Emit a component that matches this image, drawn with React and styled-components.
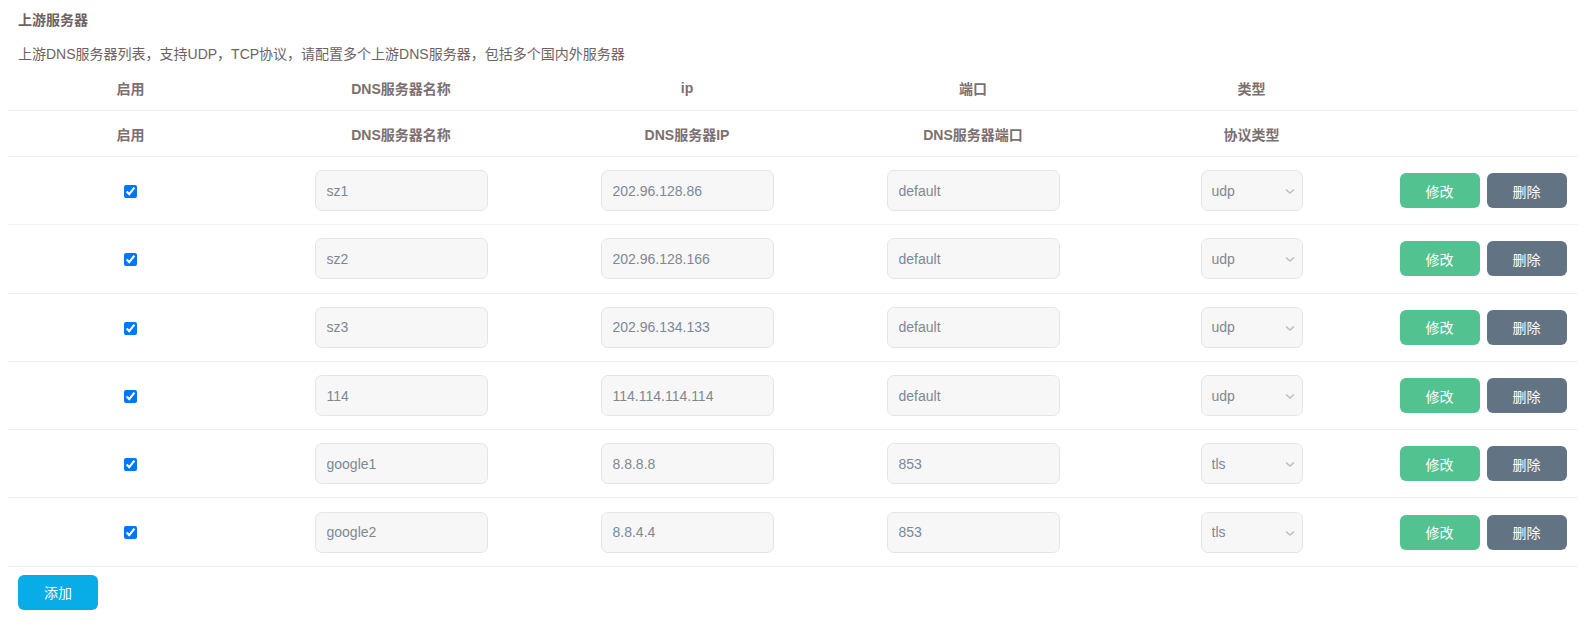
import styled, { createGlobalStyle } from 'styled-components'

const GlobalStyle = createGlobalStyle`
    body {
        margin: 8px;
        background: #ffffff;
        font-family: "Liberation Sans", "Noto Sans CJK SC", sans-serif;
    }
`

const colors = {
    title: '#6e6262',
    header: '#7b6f6f',
    inputText: '#7d8896',
    inputBg: '#f7f7f7',
    inputBorder: '#e3e6e8',
    line: '#f1f1f1',
    edit: '#52c291',
    remove: '#627384',
    add: '#08ace6',
}

const Section = styled.section`
    display: flex;
    flex-direction: column;
`

const Title = styled.h3`
    margin: 2px 10px 0;
    font-size: 14px;
    line-height: 20px;
    font-weight: bold;
    color: ${colors.title};
`

const Description = styled.p`
    margin: 14px 10px 0;
    font-size: 14px;
    line-height: 20px;
    color: ${colors.title};
`

const Table = styled.table`
    width: 100%;
    margin-top: 1px;
    border-collapse: collapse;
    table-layout: fixed;
`

const HeadCell = styled.th`
    height: 45px;
    padding: 0;
    font-size: 14px;
    font-weight: bold;
    color: ${colors.header};
    text-align: center;
    border-bottom: 1px solid ${colors.line};
`

const Row = styled.tr`
    height: 68.3px;
    border-bottom: 1px solid ${colors.line};
`

const Cell = styled.td`
    padding: 0;
    text-align: center;
    vertical-align: middle;
`

const Check = styled.input`
    width: 13px;
    height: 13px;
    margin: 0;
    accent-color: #0075ff;
    vertical-align: middle;
`

const Field = styled.input`
    box-sizing: border-box;
    width: 173px;
    height: 41px;
    padding: 0 11px;
    border: 1px solid ${colors.inputBorder};
    border-radius: 7px;
    background: ${colors.inputBg};
    color: ${colors.inputText};
    font-family: "Liberation Sans", "Noto Sans CJK SC", sans-serif;
    font-size: 14px;
    outline: none;
`

const SelectWrap = styled.div`
    position: relative;
    display: inline-block;
    width: 102px;
    height: 41px;
    vertical-align: middle;
`

const Select = styled.select`
    box-sizing: border-box;
    width: 100%;
    height: 100%;
    padding: 0 10px;
    appearance: none;
    border: 1px solid ${colors.inputBorder};
    border-radius: 7px;
    background: ${colors.inputBg};
    color: ${colors.inputText};
    font-family: "Liberation Sans", "Noto Sans CJK SC", sans-serif;
    font-size: 14px;
    outline: none;
`

const Chevron = styled.svg`
    position: absolute;
    right: 7px;
    top: 15px;
    pointer-events: none;
`

const Actions = styled.div`
    display: flex;
    justify-content: center;
    gap: 7px;
    padding-left: 6px;
`

const Button = styled.button`
    width: 80px;
    height: 35px;
    border: none;
    border-radius: 6px;
    background: ${(p) => p.$bg};
    color: #ffffff;
    font-family: "Liberation Sans", "Noto Sans CJK SC", sans-serif;
    font-size: 14px;
    cursor: pointer;
`

const Footer = styled.div`
    padding: 8px 10px 0;
`

const servers = [
    { name: 'sz1', ip: '202.96.128.86', port: 'default', type: 'udp' },
    { name: 'sz2', ip: '202.96.128.166', port: 'default', type: 'udp' },
    { name: 'sz3', ip: '202.96.134.133', port: 'default', type: 'udp' },
    { name: '114', ip: '114.114.114.114', port: 'default', type: 'udp' },
    { name: 'google1', ip: '8.8.8.8', port: '853', type: 'tls' },
    { name: 'google2', ip: '8.8.4.4', port: '853', type: 'tls' },
]

const widths = [245, 296, 276, 296, 261, 196]

export default function App() {
    return (
        <Section>
            <GlobalStyle />
            <Title>上游服务器</Title>
            <Description>
                上游DNS服务器列表，支持UDP，TCP协议，请配置多个上游DNS服务器，包括多个国内外服务器
            </Description>
            <Table>
                <colgroup>
                    {widths.map((w, i) => (
                        <col key={i} style={{ width: w }} />
                    ))}
                </colgroup>
                <thead>
                    <tr>
                        <HeadCell>启用</HeadCell>
                        <HeadCell>DNS服务器名称</HeadCell>
                        <HeadCell>ip</HeadCell>
                        <HeadCell>端口</HeadCell>
                        <HeadCell>类型</HeadCell>
                        <HeadCell />
                    </tr>
                    <tr>
                        <HeadCell>启用</HeadCell>
                        <HeadCell>DNS服务器名称</HeadCell>
                        <HeadCell>DNS服务器IP</HeadCell>
                        <HeadCell>DNS服务器端口</HeadCell>
                        <HeadCell>协议类型</HeadCell>
                        <HeadCell />
                    </tr>
                </thead>
                <tbody>
                    {servers.map((s) => (
                        <Row key={s.name}>
                            <Cell>
                                <Check type="checkbox" defaultChecked />
                            </Cell>
                            <Cell>
                                <Field defaultValue={s.name} />
                            </Cell>
                            <Cell>
                                <Field defaultValue={s.ip} />
                            </Cell>
                            <Cell>
                                <Field defaultValue={s.port} />
                            </Cell>
                            <Cell>
                                <SelectWrap>
                                    <Select defaultValue={s.type}>
                                        <option value="udp">udp</option>
                                        <option value="tcp">tcp</option>
                                        <option value="tls">tls</option>
                                    </Select>
                                    <Chevron width="12" height="12" viewBox="0 0 12 12">
                                        <path
                                            d="M2 4.5 L6 8 L10 4.5"
                                            fill="none"
                                            stroke="#b9bec4"
                                            strokeWidth="1.5"
                                        />
                                    </Chevron>
                                </SelectWrap>
                            </Cell>
                            <Cell>
                                <Actions>
                                    <Button $bg={colors.edit}>修改</Button>
                                    <Button $bg={colors.remove}>删除</Button>
                                </Actions>
                            </Cell>
                        </Row>
                    ))}
                </tbody>
            </Table>
            <Footer>
                <Button $bg={colors.add}>添加</Button>
            </Footer>
        </Section>
    )
}
